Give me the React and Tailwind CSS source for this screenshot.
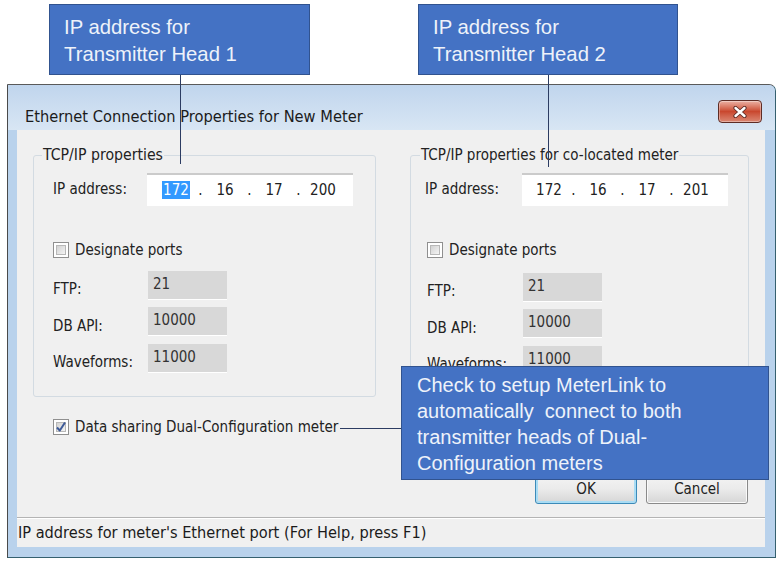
import React from "react";

const dlg = "font-['DejaVu_Sans_Condensed','DejaVu_Sans',sans-serif]";
const note = "font-['Liberation_Sans',Arial,sans-serif]";

function CheckBox({ checked }) {
  return (
    <span className="w-[16px] h-[16px] shrink-0 border border-[#8f8f8f] bg-white p-[2px] flex">
      <span className="flex-1 border border-[#b8b8b8] bg-gradient-to-br from-[#d2d2d2] to-[#f4f4f4] flex items-center justify-center">
        {checked && (
          <svg width="12" height="12" viewBox="0 0 12 12" className="-m-[2px]">
            <path d="M2 6.5 L4.8 9.5 L10 1.5" stroke="#3d5a98" strokeWidth="2" fill="none" strokeLinejoin="round" />
          </svg>
        )}
      </span>
    </span>
  );
}

function IpField({ parts, selectFirst, pad }) {
  return (
    <div className={`w-[206px] h-[33px] bg-white border-t-2 border-[#cbcbcb] flex items-center ${pad} text-[15px] text-[#222]`}>
      {parts.map((p, i) => (
        <React.Fragment key={i}>
          {i > 0 && <span className="w-[13px] text-center">.</span>}
          <span className="w-[36px] text-center">
            {i === 0 && selectFirst ? (
              <span className="bg-[#3399ff] text-white px-[1px]">{p}</span>
            ) : (
              p
            )}
          </span>
        </React.Fragment>
      ))}
    </div>
  );
}

function PortRow({ label, value, labelW }) {
  return (
    <div className="flex items-center">
      <span className={`${labelW} pt-[8px] text-[15px] text-[#222]`}>{label}</span>
      <div className="w-[79px] h-[29px] bg-[#d8d8d8] border-b border-white pl-[5px] text-[15px] text-[#333] leading-[27px]">
        {value}
      </div>
    </div>
  );
}

function TcpGroup({ title, parts, selectFirst, className, legendMl, titleSize, ipLabelPl, ipLabelW, ipPad, rowPl, portLabelW, portsMt }) {
  return (
    <fieldset className={`border border-[#d3dbe2] rounded-[3px] h-[251px] ${className}`}>
      <legend className={`${legendMl} ${titleSize} px-[1px] leading-[18px] text-[#222]`}>{title}</legend>
      <div className={`mt-[9px] flex items-center ${ipLabelPl}`}>
        <span className={`${ipLabelW} text-[15px] text-[#222]`}>IP address:</span>
        <IpField parts={parts} selectFirst={selectFirst} pad={ipPad} />
      </div>
      <div className={`mt-[36px] flex items-center gap-[6px] ${rowPl}`}>
        <CheckBox />
        <span className="text-[15px] text-[#222] leading-[16px]">Designate ports</span>
      </div>
      <div className={`${portsMt} flex flex-col gap-[6px] ${rowPl}`}>
        <PortRow label="FTP:" value="21" labelW={portLabelW} />
        <PortRow label="DB API:" value="10000" labelW={portLabelW} />
        <PortRow label="Waveforms:" value="11000" labelW={portLabelW} />
      </div>
    </fieldset>
  );
}

function WinButton({ children, focused }) {
  return (
    <div
      className={`w-[102px] h-[30px] rounded-[3px] border flex items-center justify-center text-[15px] text-[#222] bg-gradient-to-b from-[#f4f4f4] via-[#ebebeb] to-[#d6d6d6] ${
        focused ? "border-[#3c8ab8] shadow-[inset_0_0_0_2px_#a9dcf4]" : "border-[#8a8a8a] shadow-[inset_0_0_0_1px_#fafafa]"
      }`}
    >
      {children}
    </div>
  );
}

export default function App() {
  return (
    <div className="relative w-[780px] h-[562px] bg-white overflow-hidden">
      {/* dialog window */}
      <div
        className={`ml-[7px] mt-[84px] w-[769px] h-[474px] flex flex-col border border-[#35606f] border-t-[#5a5a5a] border-l-[#4a4a4a] rounded-tr-[7px] bg-[#b9d2ec] ${dlg}`}
      >
        {/* title bar */}
        <div className="h-[45px] shrink-0 flex items-start justify-between pl-[17px] pr-[13px] rounded-tr-[6px] bg-gradient-to-b from-[#c0d5ed] to-[#d8e6f4]">
          <span className="mt-[23px] text-[16.3px] leading-[18px] text-[#1b1b1b]">Ethernet Connection Properties for New Meter</span>
          <div className="mt-[15px] w-[44px] h-[23px] rounded-[4px] border border-[#5e2c25] bg-gradient-to-b from-[#eab1a4] via-[#c9472e] to-[#da8773] shadow-[inset_0_0_0_1px_rgba(255,255,255,0.35)] flex items-center justify-center">
            <svg width="16" height="12" viewBox="0 0 16 12">
              <path d="M3.5 2 L12.5 10 M12.5 2 L3.5 10" stroke="#5a2a24" strokeWidth="4.2" strokeLinecap="round" />
              <path d="M3.5 2 L12.5 10 M12.5 2 L3.5 10" stroke="#ffffff" strokeWidth="2.4" strokeLinecap="round" />
            </svg>
          </div>
        </div>

        {/* client area */}
        <div className="flex-1 ml-[9px] mr-[10px] mb-[10px] bg-[#f0f0f0] flex flex-col">
          <div className="flex-1 flex flex-col">
            <div className="mt-[16px] flex">
              <TcpGroup
                title="TCP/IP properties"
                parts={["172", "16", "17", "200"]}
                selectFirst
                className="ml-[16px] w-[343px]"
                legendMl="ml-[8px]"
                titleSize="text-[15.7px]"
                ipLabelPl="pl-[19px]"
                ipLabelW="w-[94px]"
                ipPad="pl-[11px]"
                rowPl="pl-[19px]"
                portLabelW="w-[95px]"
                portsMt="mt-[12px]"
              />
              <TcpGroup
                title="TCP/IP properties for co-located meter"
                parts={["172", "16", "17", "201"]}
                className="ml-[34px] w-[339px]"
                legendMl="ml-[9px]"
                titleSize="text-[15px]"
                ipLabelPl="pl-[14px]"
                ipLabelW="w-[97px]"
                ipPad="pl-[9px]"
                rowPl="pl-[16px]"
                portLabelW="w-[96px]"
                portsMt="mt-[14px]"
              />
            </div>
            <div className="mt-[21px] ml-[36px] flex items-center gap-[6px]">
              <CheckBox checked />
              <span className="text-[15px] text-[#222] leading-[18px]">Data sharing Dual-Configuration meter</span>
            </div>
            <div className="mt-[38px] mr-[17px] flex justify-end gap-[9px]">
              <WinButton focused>OK</WinButton>
              <WinButton>Cancel</WinButton>
            </div>
          </div>
          <div className="h-px bg-[#b4b4b4]" />
          <div className="h-px bg-white" />
          <div className="h-[28px] flex items-center pl-[1px] text-[16.2px] text-[#1b1b1b]">
            IP address for meter's Ethernet port (For Help, press F1)
          </div>
        </div>
      </div>

      {/* callout leader lines */}
      <div className="absolute left-[180px] top-[75px] w-px h-[89px] bg-[#2c3c62]" />
      <div className="absolute left-[548px] top-[75px] w-px h-[92px] bg-[#2c3c62]" />
      <div className="absolute left-[340px] top-[428px] w-[61px] h-px bg-[#2c3c62]" />

      {/* callouts */}
      <div className={`absolute left-[49px] top-[4px] w-[261px] h-[71px] bg-[#4472c4] border border-[#31538f] pl-[14px] pt-[9px] text-[20.3px] leading-[27px] text-[#eef2fa] ${note}`}>
        IP address for
        <br />
        Transmitter Head 1
      </div>
      <div className={`absolute left-[418px] top-[4px] w-[260px] h-[71px] bg-[#4472c4] border border-[#31538f] pl-[14px] pt-[9px] text-[20.3px] leading-[27px] text-[#eef2fa] ${note}`}>
        IP address for
        <br />
        Transmitter Head 2
      </div>
      <div className={`absolute left-[401px] top-[366px] w-[368px] h-[114px] bg-[#4472c4] border border-[#31538f] pl-[15px] pt-[5px] text-[20px] leading-[26px] text-[#eef2fa] whitespace-pre ${note}`}>
        {"Check to setup MeterLink to\nautomatically  connect to both\ntransmitter heads of Dual-\nConfiguration meters"}
      </div>
    </div>
  );
}
